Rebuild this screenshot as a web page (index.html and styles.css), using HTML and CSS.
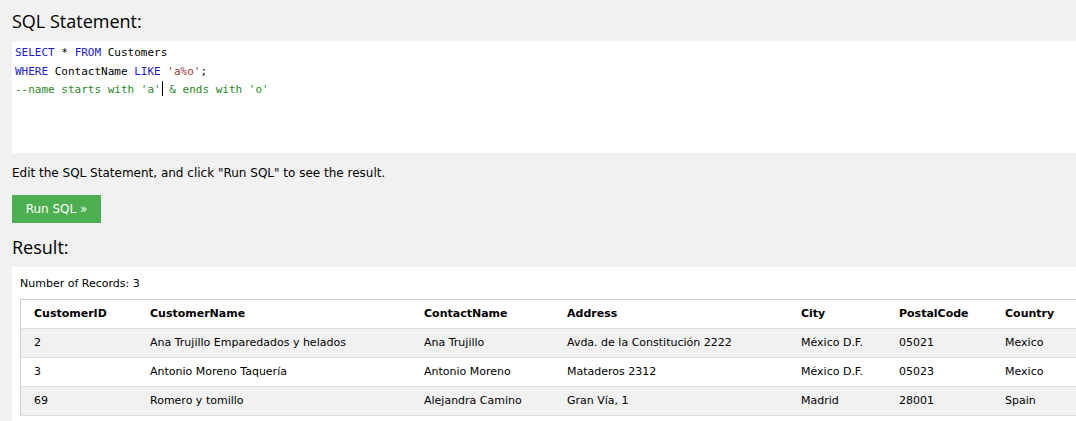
FILE: index.html
```html
<!DOCTYPE html>
<html>
<head>
<meta charset="utf-8">
<link rel="stylesheet" href="styles.css">
</head>
<body>
<div class="page">
  <h2 class="title">SQL Statement:</h2>
  <div class="editor">
    <div class="line"><span class="kw">SELECT</span> * <span class="kw">FROM</span> Customers</div>
    <div class="line"><span class="kw">WHERE</span> ContactName <span class="kw">LIKE</span> <span class="str">'a%o'</span>;</div>
    <div class="line"><span class="cm">--name starts with 'a'<span class="cursor"></span> &amp; ends with 'o'</span></div>
  </div>
  <p class="hint">Edit the SQL Statement, and click "Run SQL" to see the result.</p>
  <button class="run">Run SQL »</button>
  <h2 class="title result-title">Result:</h2>
  <div class="result">
    <div class="count">Number of Records: 3</div>
    <table class="grid">
      <thead>
        <tr><th class="c1">CustomerID</th><th class="c2">CustomerName</th><th class="c3">ContactName</th><th class="c4">Address</th><th class="c5">City</th><th class="c6">PostalCode</th><th class="c7">Country</th></tr>
      </thead>
      <tbody>
        <tr><td>2</td><td>Ana Trujillo Emparedados y helados</td><td>Ana Trujillo</td><td>Avda. de la Constitución 2222</td><td>México D.F.</td><td>05021</td><td>Mexico</td></tr>
        <tr><td>3</td><td>Antonio Moreno Taquería</td><td>Antonio Moreno</td><td>Mataderos 2312</td><td>México D.F.</td><td>05023</td><td>Mexico</td></tr>
        <tr><td>69</td><td>Romero y tomillo</td><td>Alejandra Camino</td><td>Gran Vía, 1</td><td>Madrid</td><td>28001</td><td>Spain</td></tr>
      </tbody>
    </table>
  </div>
</div>
</body>
</html>
```
FILE: styles.css
```css
html, body {
  margin: 0;
  padding: 0;
  background: #f1f1f1;
  overflow: hidden;
}
.page {
  padding-left: 12px;
  font-family: "DejaVu Sans", Verdana, sans-serif;
  color: #000;
}
.title {
  margin: 0;
  padding-top: 8px;
  height: 41px;
  box-sizing: border-box;
  font-family: "Open Sans", "Segoe UI", sans-serif;
  font-weight: 400;
  font-size: 18px;
  line-height: 26px;
  color: #000;
}
.editor {
  background: #fff;
  height: 112px;
  box-sizing: border-box;
  padding: 3px 0 0 3px;
  font-family: "DejaVu Sans Mono", "Liberation Mono", monospace;
  font-size: 11px;
  line-height: 18.5px;
  color: #000;
}
.kw { color: #1a1acc; }
.str { color: #a33a3a; }
.cm { color: #1f8a1f; }
.cursor {
  display: inline-block;
  width: 1px;
  height: 15px;
  background: #000;
  vertical-align: -3px;
  margin-left: 1px;
}
.hint {
  margin: 0;
  padding-top: 12px;
  height: 42px;
  box-sizing: border-box;
  font-size: 12px;
  line-height: 16px;
}
.run {
  display: block;
  border: 0;
  margin: 0;
  background: #4caf50;
  color: #fff;
  font-family: "DejaVu Sans", Verdana, sans-serif;
  font-size: 12px;
  width: 89px;
  height: 28px;
  padding: 0;
}
.result-title {
  padding-top: 11px;
  height: 44px;
}
.result {
  background: #fff;
  padding: 10px 0 0 8px;
  height: 200px;
  box-sizing: border-box;
}
.count {
  font-size: 11px;
  line-height: 14px;
  height: 22px;
}
.grid {
  border-collapse: collapse;
  border: 1px solid #ccc;
  width: 1100px;
  font-size: 11px;
  table-layout: fixed;
}
.grid th, .grid td {
  text-align: left;
  padding: 0 0 0 13px;
  height: 28px;
  line-height: 14px;
  border-bottom: 1px solid #ddd;
}
.grid th { font-weight: bold; }
.grid tbody tr:nth-child(odd) { background: #f1f1f1; }
.c1 { width: 103px; }
.c2 { width: 261px; }
.c3 { width: 130px; }
.c4 { width: 221px; }
.c5 { width: 85px; }
.c6 { width: 93px; }
.c7 { width: 140px; }
```
